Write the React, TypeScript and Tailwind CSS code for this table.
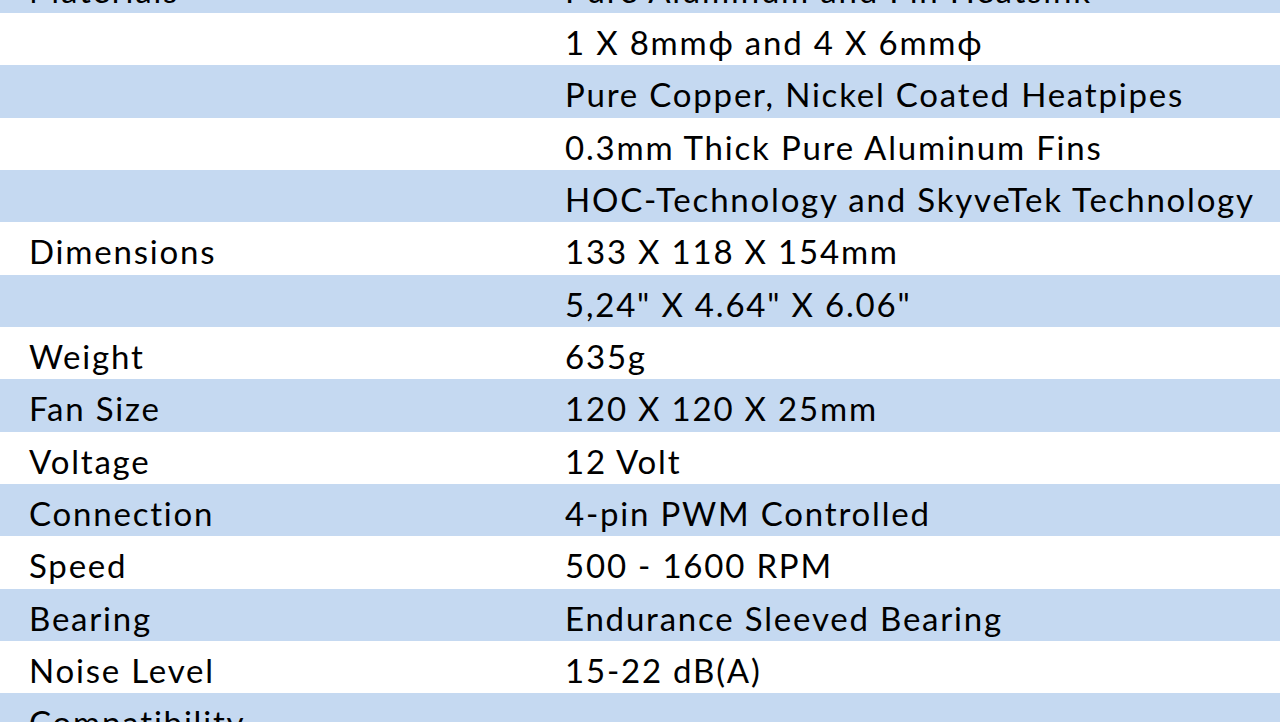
const rows: [string, string][] = [
  ["Materials", "Pure Aluminum and Fin Heatsink"],
  ["", "1 X 8mmϕ and 4 X 6mmϕ"],
  ["", "Pure Copper, Nickel Coated Heatpipes"],
  ["", "0.3mm Thick Pure Aluminum Fins"],
  ["", "HOC-Technology and SkyveTek Technology"],
  ["Dimensions", "133 X 118 X 154mm"],
  ["", '5,24" X 4.64" X 6.06"'],
  ["Weight", "635g"],
  ["Fan Size", "120 X 120 X 25mm"],
  ["Voltage", "12 Volt"],
  ["Connection", "4-pin PWM Controlled"],
  ["Speed", "500 - 1600 RPM"],
  ["Bearing", "Endurance Sleeved Bearing"],
  ["Noise Level", "15-22 dB(A)"],
  ["Compatibility", ""],
];

export default function App() {
  return (
    <div className="w-[1280px] h-[722px] overflow-hidden bg-white font-['Lato',sans-serif] text-[33px] tracking-[1.8px] text-black">
      <div className="-mt-[39.3px] flex flex-col">
        {rows.map(([label, value], i) => (
          <div
            key={i}
            className={
              "flex h-[52.33px] shrink-0 leading-[52.33px] pt-[3px] " +
              (i % 2 === 0 ? "bg-[#c5d9f1]" : "bg-white")
            }
          >
            <div className="w-[565px] pl-[29px] whitespace-nowrap">{label}</div>
            <div className="flex-1 whitespace-nowrap">{value}</div>
          </div>
        ))}
      </div>
    </div>
  );
}
